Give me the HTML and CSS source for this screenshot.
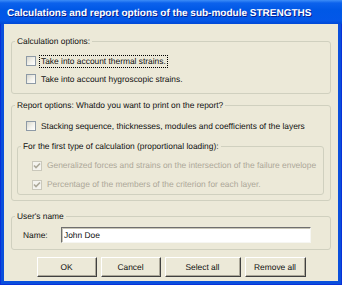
FILE: index.html
```html
<!DOCTYPE html>
<html>
<head>
<meta charset="utf-8">
<link rel="stylesheet" href="styles.css">
</head>
<body>
<div class="window">
  <div class="titlebar"><span class="title">Calculations and report options of the sub-module STRENGTHS</span></div>
  <div class="client">
    <fieldset class="group g1">
      <legend>Calculation options:</legend>
      <div class="row"><span class="cb"></span><span class="lbl focus">Take into account thermal strains.</span></div>
      <div class="row"><span class="cb"></span><span class="lbl">Take into account hygroscopic strains.</span></div>
    </fieldset>
    <fieldset class="group g2">
      <legend>Report options: Whatdo you want to print on the report?</legend>
      <div class="row"><span class="cb"></span><span class="lbl">Stacking sequence, thicknesses, modules and coefficients of the layers</span></div>
      <fieldset class="group inner">
        <legend>For the first type of calculation (proportional loading):</legend>
        <div class="row row19 disabled"><span class="cb cb-dis"><svg width="8" height="8" viewBox="0 0 8 8"><polyline points="1,3.5 3,5.5 7,1.5" fill="none" stroke="#aca899" stroke-width="1.6"/></svg></span><span class="lbl">Generalized forces and strains on the intersection of the failure envelope</span></div>
        <div class="row row19 disabled"><span class="cb cb-dis"><svg width="8" height="8" viewBox="0 0 8 8"><polyline points="1,3.5 3,5.5 7,1.5" fill="none" stroke="#aca899" stroke-width="1.6"/></svg></span><span class="lbl">Percentage of the members of the criterion for each layer.</span></div>
      </fieldset>
    </fieldset>
    <fieldset class="group g3">
      <legend>User's name</legend>
      <div class="namerow"><span class="namelbl">Name:</span><input class="input" type="text" value="John Doe"></div>
    </fieldset>
    <div class="buttons">
      <button class="btn w60">OK</button>
      <button class="btn w60">Cancel</button>
      <button class="btn w76">Select all</button>
      <button class="btn w61">Remove all</button>
    </div>
  </div>
</div>
</body>
</html>
```
FILE: styles.css
```css
html, body {
  margin: 0;
  padding: 0;
}
body {
  width: 342px;
  height: 285px;
  overflow: hidden;
  font-family: "Liberation Sans", Arial, sans-serif;
  font-size: 8.4px;
  color: #111;
  text-rendering: geometricPrecision;
}
.window {
  box-sizing: border-box;
  width: 342px;
  height: 285px;
  display: flex;
  flex-direction: column;
  background: #0a4fdc;
  padding: 0 4px 4px;
  box-shadow: inset 1px 0 0 #0831d9, inset -1px 0 0 #0831d9, inset 0 -1px 0 #0831d9;
}
.titlebar {
  height: 24px;
  flex: none;
  margin: 0 -4px;
  padding-left: 7px;
  background: linear-gradient(to bottom, #3d8df7 0, #0c62ec 3px, #0058e6 40%, #0357e8 85%, #0149d6 100%);
}
.title {
  display: block;
  padding-top: 8px;
  font-size: 10px;
  line-height: 12px;
  font-weight: bold;
  color: #fff;
  text-shadow: 1px 1px 0 #0a1f8f;
  white-space: nowrap;
}
.client {
  flex: 1;
  background: #ece9d8;
  padding: 0 7px;
  display: flex;
  flex-direction: column;
}
.group {
  margin: 0;
  padding: 0;
  border: 1px solid #d0d0bf;
  border-radius: 3px;
  min-width: 0;
}
legend {
  margin-left: 3px;
  padding: 0 2px;
  line-height: 11px;
  font-size: 8.4px;
}
.g1 {
  margin-top: 12px;
  padding: 5px 0 5px;
}
.g2 {
  margin-top: 6px;
  padding: 6px 0 5px;
}
.inner {
  margin: 6px 6px 0 5px;
  padding: 4px 0 0;
}
.g3 {
  margin-top: 10px;
  padding: 5px 0 6px;
}
.row {
  display: flex;
  align-items: center;
  height: 18px;
  padding-left: 14px;
}
.row19 {
  height: 19px;
}
.cb {
  box-sizing: border-box;
  width: 10px;
  height: 10px;
  flex: none;
  margin-right: 3px;
  border: 1px solid #8e9aa6;
  background: linear-gradient(135deg, #d9d8ce 0, #f3f2ec 55%, #ffffff 100%);
  display: flex;
  align-items: center;
  justify-content: center;
}
.cb-dis {
  border-color: #cac8bb;
  background: #f4f3ee;
}
.lbl {
  border: 1px dotted transparent;
  padding: 0 1px;
  line-height: 11px;
  white-space: nowrap;
}
.lbl.focus {
  border-color: #000;
}
.disabled .lbl {
  color: #aca899;
}
.namerow {
  display: flex;
  align-items: center;
  padding-left: 11px;
}
.namelbl {
  width: 38px;
  flex: none;
  line-height: 11px;
}
.input {
  box-sizing: border-box;
  width: 250px;
  height: 16px;
  margin: 0;
  padding: 0 0 0 2px;
  font-family: "Liberation Sans", Arial, sans-serif;
  font-size: 8.4px;
  color: #111;
  background: #fff;
  border: 1px solid;
  border-color: #6f6f6f #f6f6f2 #f6f6f2 #6f6f6f;
  box-shadow: inset 1px 1px 0 #c9c6b6;
  outline: none;
  text-rendering: geometricPrecision;
}
.buttons {
  margin-top: 7px;
  display: flex;
  justify-content: center;
  gap: 4px;
}
.btn {
  box-sizing: border-box;
  height: 20px;
  margin: 0;
  padding: 0;
  font-family: "Liberation Sans", Arial, sans-serif;
  font-size: 8.4px;
  color: #111;
  background: #ece9d8;
  border: 1px solid;
  border-color: #ffffff #404040 #404040 #ffffff;
  box-shadow: inset -1px -1px 0 #aca899;
  text-rendering: geometricPrecision;
}
.w60 { width: 60px; }
.w61 { width: 61px; }
.w76 { width: 76px; }
```
